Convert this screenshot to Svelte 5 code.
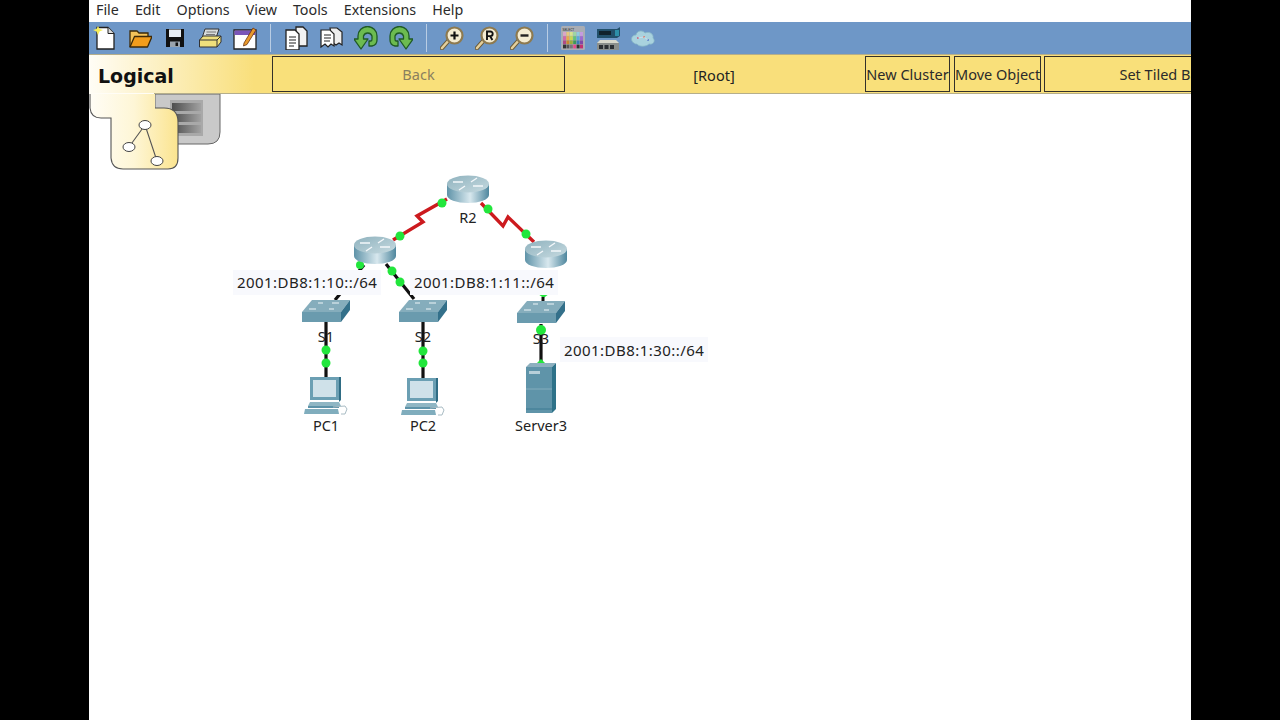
<script lang="ts">
  const menus = ['File', 'Edit', 'Options', 'View', 'Tools', 'Extensions', 'Help'];

  const routers = [
    { x: 468, y: 189 },
    { x: 375, y: 250 },
    { x: 546, y: 254 },
  ];
  const switches = [
    { x: 326, y: 311 },
    { x: 423, y: 311 },
    { x: 541, y: 312 },
  ];
  const pcs = [
    { x: 325, y: 395 },
    { x: 422, y: 396 },
  ];

  const serial = [
    '447,199 417,216 423,222 393,240',
    '481,203 503,226 508,217 534,242',
  ];
  const copper = [
    '364,265 335,300',
    '386,264 414,299',
    '326,322 326,378',
    '423,322 423,378',
    '541,324 541,362',
  ];
  const dots = [
    [442, 203], [400, 236], [488, 209], [526, 234],
    [392, 271], [400, 282],
    [326, 350], [326, 363], [423, 351], [423, 363],
  ];
  const nets = [
    { x: 233, y: 270, w: 148, h: 25, tx: 237, ty: 288, text: '2001:DB8:1:10::/64' },
    { x: 410, y: 270, w: 148, h: 25, tx: 414, ty: 288, text: '2001:DB8:1:11::/64' },
    { x: 560, y: 337, w: 148, h: 25, tx: 564, ty: 356, text: '2001:DB8:1:30::/64' },
  ];
  const names = [
    { x: 468, y: 223, text: 'R2' },
    { x: 326, y: 342, text: 'S1' },
    { x: 423, y: 342, text: 'S2' },
    { x: 541, y: 344, text: 'S3' },
    { x: 326, y: 431, text: 'PC1' },
    { x: 423, y: 431, text: 'PC2' },
    { x: 541, y: 431, text: 'Server3' },
  ];

  const paletteRows = [
    ['#d9a6c8', '#e7c77c', '#d8e48c', '#9fd7a2', '#8fcbe0', '#c49be0'],
    ['#d06aa8', '#e8a94a', '#c6d855', '#62c47a', '#5aa9dc', '#a06ad0'],
    ['#b04a86', '#c8862e', '#9cae3c', '#3d9a58', '#3a7cb8', '#8048a8'],
    ['#333333', '#555555', '#777777', '#e84a8a', '#333333', '#c03070'],
  ];
</script>

{#snippet lens(mark)}
  <svg class="icon" viewBox="0 0 24 24">
    <path d="M2 22 10 13" stroke="#6b5a38" stroke-width="4.4" stroke-linecap="round" />
    <path d="M2 22 10 13" stroke="#e3cf9c" stroke-width="2.6" stroke-linecap="round" />
    <circle cx="14.5" cy="9.5" r="8" fill="#f4ecd2" stroke="#8d7a50" stroke-width="2.2" />
    {#if mark === 'plus'}
      <path d="M10.5 9.5h8M14.5 5.5v8" stroke="#111" stroke-width="2.2" />
    {:else if mark === 'minus'}
      <path d="M10.5 9.5h8" stroke="#222" stroke-width="2.4" />
    {:else}
      <path d="M12 14V5.5h3.4a2.3 2.3 0 0 1 0 4.6H12M15 10l2.4 4" fill="none" stroke="#111" stroke-width="1.9" />
    {/if}
  </svg>
{/snippet}

{#snippet turn(flip)}
  <svg class="icon" viewBox="0 0 24 24">
    <g transform={flip ? 'translate(24 0) scale(-1 1)' : ''}>
      <path d="M4 13V10A9.500 9.500 0 0 1 23 10V14Q23 19 18 20H15V15H17Q18 15 18 13V10A4.500 4.500 0 0 0 9.500 10V13H14L7 23 0 13Z" fill="#6cbb50" stroke="#1f5a26" stroke-width="1.300" stroke-linejoin="round" />
    </g>
  </svg>
{/snippet}

<div class="window">
  <nav class="menubar">
    {#each menus as menu}
      <span>{menu}</span>
    {/each}
  </nav>

  <div class="toolbar">
    <div class="group">
      <svg class="icon" viewBox="0 0 24 24">
        <path d="M4 1.500H15L21 7.500V23H4Z" fill="#fff" stroke="#222" stroke-width="1.300" />
        <path d="M15 1.500V7.500H21" fill="#ddd" stroke="#222" />
        <path d="M5 0 6.500 3 10 4 6.500 5.500 5 9 3.500 5.500 0 4 3.500 3Z" fill="#f6ee5a" />
      </svg>
      <svg class="icon" viewBox="0 0 24 24">
        <path d="M2 21V5H9L11 7H20V11" fill="#f4c35a" stroke="#3d2a08" stroke-width="1.300" />
        <path d="M2 21 6.500 10.500H24L19.500 21Z" fill="#f29d1c" stroke="#3d2a08" stroke-width="1.300" stroke-linejoin="round" />
      </svg>
      <svg class="icon" viewBox="0 0 24 24">
        <path d="M3 3H21V21H3Z" fill="#111" />
        <path d="M6 3.500H18V11H6Z" fill="#e8eef4" />
        <path d="M7 15.500H17V21H7Z" fill="#9aa4ae" />
        <path d="M12.500 16.500H15V20H12.500Z" fill="#111" />
      </svg>
      <svg class="icon" viewBox="0 0 24 24">
        <path d="M7 3H21L18 12H4Z" fill="#d8dcdc" stroke="#333" />
        <path d="M8.500 6H18M8 8.500H17" stroke="#777" />
        <path d="M1.500 14 5 10H23V16L19 21H1.500Z" fill="#efe07c" stroke="#333" stroke-linejoin="round" />
        <path d="M1.500 14H19V21M19 14 23 10" fill="none" stroke="#333" />
      </svg>
      <svg class="icon" viewBox="0 0 24 24">
        <path d="M1 4H23V23H1Z" fill="#fff" stroke="#222" stroke-width="1.300" />
        <path d="M1.500 4.500H22.500V9H1.500Z" fill="#7a55b8" />
        <path d="M11 17 20 2 23 4 14 18.500 10.500 20Z" fill="#e99a2c" stroke="#6b3310" stroke-width=".8" />
      </svg>
    </div>
    <i class="sep"></i>
    <div class="group">
      <svg class="icon" viewBox="0 0 24 24">
        <path d="M12 1H19L23 5V20H12Z" fill="#f2f2f2" stroke="#222" stroke-width="1.300" />
        <path d="M2 4H11L15 8V24H2Z" fill="#fff" stroke="#222" stroke-width="1.300" />
        <path d="M5 11H12M5 14H12M5 17H12M5 20H10" stroke="#222" stroke-width="1.100" />
      </svg>
      <svg class="icon" viewBox="0 0 24 24">
        <path d="M11 2H18L23 6V19L20 17 17 19 14 17Z" fill="#eee" stroke="#222" stroke-width="1.200" />
        <path d="M2 4H11L15 8V20L12 18 9 21 6 18 2 21Z" fill="#fff" stroke="#222" stroke-width="1.200" />
        <path d="M5 9H12M5 12H12M5 15H11" stroke="#222" />
      </svg>
      {@render turn(false)}
      {@render turn(true)}
    </div>
    <i class="sep"></i>
    <div class="group">
      {@render lens('plus')}
      {@render lens('R')}
      {@render lens('minus')}
    </div>
    <i class="sep"></i>
    <div class="group">
      <svg class="icon" viewBox="0 0 24 24">
        <rect x="0" y="0" width="24" height="24" rx="1.500" fill="#a9adb4" />
        <text x="1.500" y="4.500" class="tiny">SELECT</text>
        {#each paletteRows as row, r}
          {#each row as cell, c}
            <rect x={2 + c * 3.400} y={6 + r * 4.200} width="3" height="3.800" fill={cell} />
          {/each}
        {/each}
      </svg>
      <svg class="icon" viewBox="0 0 24 24">
        <path d="M1 3H21L24 1V10L21 12H1Z" fill="#22506a" />
        <path d="M3 5H15V9H3Z" fill="#10222c" />
        <path d="M19 4H23V10H19Z" fill="#2d8fa8" />
        <path d="M4 14H20L23 17H1Z" fill="#d8d8cc" />
        <path d="M1 17H23V24H1Z" fill="#8b8f8c" />
        <path d="M3 19H7V23H3ZM8.500 19H12.500V23H8.500ZM14 19H18V23H14Z" fill="#2b2f33" />
      </svg>
      <svg class="icon" viewBox="0 0 24 24">
        <path d="M3 17C-1 15 0 9 5 9 6 4 12 4 14 7 18 5 23 8 22 12 25 15 22 19 18 18 15 21 8 21 6 18 5 18 4 18 3 17Z" fill="#a9d2de" stroke="#86b6c6" stroke-width=".8" />
        <circle cx="7" cy="12" r="1" fill="#c85a7a" />
        <circle cx="13" cy="11" r="1" fill="#d06a5a" />
        <circle cx="17" cy="14" r="1" fill="#5a7ac8" />
        <path d="M7 12 13 11 17 14" fill="none" stroke="#e0e8f0" stroke-width=".6" />
      </svg>
    </div>
  </div>

  <div class="navbar">
    <strong class="mode">Logical</strong>
    <button class="nav back">Back</button>
    <span class="root">[Root]</span>
    <button class="nav cluster">New Cluster</button>
    <button class="nav move">Move Object</button>
    <button class="nav tiled">Set Tiled Background</button>
  </div>

  <svg class="canvas" viewBox="89 94 1102 626">
    <defs>
      <linearGradient id="routerTop" x1="0" y1="0" x2="1" y2="1">
        <stop offset="0" stop-color="#8fb2be" />
        <stop offset="1" stop-color="#c6dae0" />
      </linearGradient>
      <linearGradient id="routerSide" x1="0" y1="0" x2="1" y2="0">
        <stop offset="0" stop-color="#5f93a8" />
        <stop offset=".55" stop-color="#d8e8ee" />
        <stop offset="1" stop-color="#4f879e" />
      </linearGradient>
      <linearGradient id="tabFill" x1="0" y1="0" x2="1" y2="0">
        <stop offset="0" stop-color="#fffdf6" />
        <stop offset=".5" stop-color="#fef6d6" />
        <stop offset="1" stop-color="#fbe48f" />
      </linearGradient>
      <linearGradient id="rackBar" x1="0" y1="0" x2="1" y2="0">
        <stop offset="0" stop-color="#4d4d4d" />
        <stop offset="1" stop-color="#a2a2a2" />
      </linearGradient>

      <g id="router">
        <path d="M-21 -5V6A21 8 0 0 0 21 6V-5Z" fill="url(#routerSide)" />
        <ellipse cx="0" cy="-5" rx="21" ry="8.500" fill="url(#routerTop)" />
        <path d="M-15 -7H-5M5 -3H15M9 -11 3 -7M-9 1 -3 -3" stroke="#f4f8fa" stroke-width="1.400" />
      </g>

      <g id="switch">
        <path d="M-14 -11H24L15 1H-24Z" fill="#85adbc" />
        <path d="M-24 1H15V11H-24Z" fill="#6a9bae" />
        <path d="M15 1 24 -11V-1L15 11Z" fill="#33708a" />
        <path d="M-8 -8H-3M6 -8H13M-17 -2H-10M3 -2H8" stroke="#eef5f8" stroke-width="1.200" />
      </g>

      <g id="pc">
        <path d="M-15 -18H16V5H-15Z" fill="#6b9fb3" />
        <path d="M14 -18H16V5L14 7Z" fill="#2f6c84" />
        <path d="M-12 -15H11V2H-12Z" fill="#cfe1e9" />
        <path d="M-15 7H14L16 11H-17Z" fill="#8fb6c4" />
        <path d="M-17 11H14V13H-17Z" fill="#5d93a9" />
        <path d="M-20 14H13L14 19H-21Z" fill="#80adbd" />
        <path d="M8 12 20 11 22 14 20 19H16" fill="none" stroke="#a9bcc4" />
      </g>

      <g id="tower">
        <path d="M-15 -46H11L15 -50H-11Z" fill="#8db0bf" />
        <path d="M-15 -46H11V0H-15Z" fill="#5f94a9" />
        <path d="M11 -46 15 -50V-4L11 0Z" fill="#2e7289" />
        <path d="M-12 -42H-1V-39H-12Z" fill="#b7cfd9" />
        <path d="M-15 -24H11" stroke="#85adbd" />
        <path d="M-15 -4H11" stroke="#3d7b92" />
      </g>
    </defs>

    <!-- tabs -->
    <path d="M155 94V144H208Q220 144 220 132V94Z" fill="#c9c9c9" stroke="#666" />
    <rect x="170" y="100" width="33" height="36" fill="#a9a9a9" />
    <rect x="172" y="103" width="29" height="8" fill="url(#rackBar)" />
    <rect x="172" y="114" width="29" height="8" fill="url(#rackBar)" />
    <rect x="172" y="125" width="29" height="8" fill="url(#rackBar)" />
    <path d="M90 94V108Q91 118 101 118H111V158Q112 169 123 169H168Q178 169 178 158V122Q178 108 164 108H155V94Z" fill="url(#tabFill)" />
    <path d="M90 94V108Q91 118 101 118H111V158Q112 169 123 169H168Q178 169 178 158V122Q178 108 164 108H155" fill="none" stroke="#555" stroke-width="1.100" />
    <path d="M145 125 129 147M145 125 157 161" stroke="#555" stroke-width="1.100" />
    <ellipse cx="145" cy="125" rx="6" ry="4.500" fill="#fff" stroke="#444" />
    <ellipse cx="129" cy="147" rx="6" ry="4.500" fill="#fff" stroke="#444" />
    <ellipse cx="157" cy="161" rx="6" ry="4.500" fill="#fff" stroke="#444" />

    <!-- links -->
    {#each copper as points}
      <polyline {points} fill="none" stroke="#111" stroke-width="3.200" />
    {/each}
    {#each serial as points}
      <polyline {points} fill="none" stroke="#cc1a1e" stroke-width="3.400" />
    {/each}
    <circle cx="360" cy="265" r="4" fill="#22e63c" />
    <path d="M538 294H549L543.500 298Z" fill="#22e63c" />
    <path d="M543 297V302" stroke="#111" stroke-width="3" />
    <circle cx="541" cy="330" r="5" fill="#22e63c" />
    <path d="M537 363 541 359 545 363Z" fill="#22e63c" />

    <!-- devices -->
    {#each routers as r}
      <use href="#router" x={r.x} y={r.y} />
    {/each}
    {#each switches as s}
      <use href="#switch" x={s.x} y={s.y} />
    {/each}
    {#each pcs as p}
      <use href="#pc" x={p.x} y={p.y} />
    {/each}
    <use href="#tower" x="541" y="413" />

    {#each dots as [cx, cy]}
      <circle {cx} {cy} r="4.500" fill="#22e63c" />
    {/each}

    <!-- labels -->
    {#each nets as n}
      <rect x={n.x} y={n.y} width={n.w} height={n.h} fill="#f8f9fd" />
      <text x={n.tx} y={n.ty} class="label net">{n.text}</text>
    {/each}
    {#each names as n}
      <text x={n.x} y={n.y} class="label" text-anchor="middle">{n.text}</text>
    {/each}
  </svg>
</div>

<style>
  :global(body) {
    margin: 0;
    background: #000;
  }

  .window {
    display: flex;
    flex-direction: column;
    width: 1102px;
    height: 720px;
    margin-left: 89px;
    overflow: hidden;
    background: #fff;
    font-family: "Noto Sans", "DejaVu Sans", sans-serif;
    color: #222;
  }

  .menubar {
    display: flex;
    flex: none;
    gap: 16px;
    height: 22px;
    padding-left: 7px;
    font-size: 14.3px;
    line-height: 20px;
    color: #2b2b2b;
  }

  .toolbar {
    display: flex;
    flex: none;
    align-items: center;
    height: 32px;
    padding-left: 4px;
    border-bottom: 1px solid #b5ae8a;
    background: #6e97c7;
  }

  .group {
    display: flex;
    gap: 11px;
  }

  .icon {
    display: block;
    width: 24px;
    height: 24px;
  }

  .tiny {
    font-size: 3.500px;
    fill: #222;
  }

  .sep {
    width: 1px;
    height: 28px;
    margin: 0 13px;
    background: #b9cde4;
  }

  .navbar {
    display: flex;
    flex: none;
    align-items: stretch;
    box-sizing: border-box;
    height: 39px;
    padding: 1px 0;
    border-bottom: 1px solid;
    border-image: linear-gradient(90deg, #fffdf6 66px, #b5ae8a 66px) 1;
    background: linear-gradient(90deg, #fffdf6 0, #f9df7b 165px);
    white-space: nowrap;
  }

  .mode {
    flex: none;
    width: 183px;
    padding-left: 9px;
    box-sizing: border-box;
    font-family: "DejaVu Sans", sans-serif;
    font-size: 19px;
    line-height: 40px;
    color: #111;
  }

  .nav {
    flex: none;
    padding: 0;
    border: 1px solid #33302a;
    background: #f9e07a;
    font: inherit;
    font-size: 14.5px;
    color: #2b2b2b;
  }

  .back {
    width: 293px;
    color: #8a7f5e;
  }

  .root {
    flex: none;
    width: 298px;
    font-size: 14.5px;
    line-height: 38px;
    text-align: center;
  }

  .cluster {
    width: 85px;
    margin-left: 2px;
  }

  .move {
    width: 87px;
    margin-left: 4px;
  }

  .tiled {
    width: 295px;
    margin-left: 3px;
  }

  .canvas {
    display: block;
    flex: none;
    width: 1102px;
    height: 626px;
  }

  .label {
    font-size: 14.5px;
    fill: #222;
  }

  .net {
    font-size: 15px;
    letter-spacing: 0.45px;
  }
</style>
